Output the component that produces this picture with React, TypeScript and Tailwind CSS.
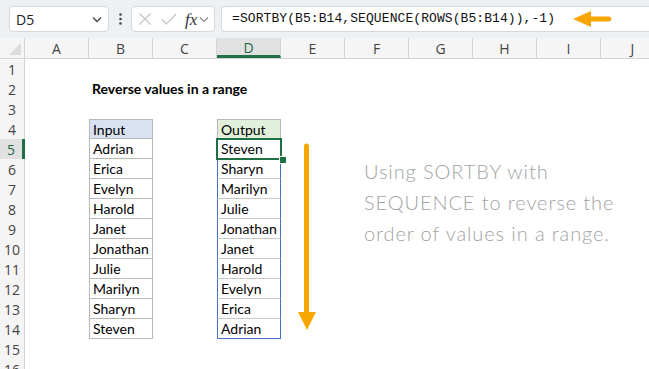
import React from "react";

const COLS = ["A", "B", "C", "D", "E", "F", "G", "H", "I", "J"];
const INPUT = ["Adrian", "Erica", "Evelyn", "Harold", "Janet", "Jonathan", "Julie", "Marilyn", "Sharyn", "Steven"];
const OUTPUT = [...INPUT].reverse();

const cellFont = { fontFamily: "Lato, 'Liberation Sans', sans-serif" };

function Cell({ r, c }: { r: number; c: string }) {
  let cls = "w-[64px] h-[20px] shrink-0 box-border px-[3px] text-[14px] leading-[19px] text-black whitespace-nowrap overflow-visible";
  let content: React.ReactNode = null;
  if (c === "B" && r === 2) {
    content = <span className="font-bold">Reverse values in a range</span>;
  }
  if (c === "B" && r >= 4 && r <= 14) {
    cls += " border-l border-r border-b border-[#b8b8b8]";
    if (r === 4) {
      cls += " border-t bg-[#d9e1f2]";
      content = "Input";
    } else content = INPUT[r - 5];
  }
  if (c === "D" && r === 4) {
    cls += " border border-[#b8b8b8] bg-[#e2efda]";
    content = "Output";
  }
  if (c === "D" && r >= 5 && r <= 14) {
    cls += " border-l border-r border-l-[#4472c4] border-r-[#4472c4] border-b";
    cls += r === 14 ? " border-b-[#4472c4]" : " border-b-[#c8c8c8]";
    content = OUTPUT[r - 5];
  }
  return (
    <div className={cls} style={cellFont}>
      {content}
    </div>
  );
}

export default function App() {
  const rows = Array.from({ length: 16 }, (_, i) => i + 1);
  return (
    <div className="w-[649px] h-[369px] overflow-hidden bg-white relative">
      {/* Toolbar */}
      <div className="h-[38px] bg-[#eef1f4] flex items-start pt-[6px] pl-[9px] gap-0">
        <div className="w-[100px] h-[26px] bg-white border border-[#d5d9dd] rounded-[4px] flex items-center justify-between pl-[6px] pr-[6px] shrink-0">
          <span className="text-[14px] text-[#222]" style={{ fontFamily: "'Open Sans', 'Noto Sans', sans-serif" }}>D5</span>
          <svg width="10" height="7" viewBox="0 0 10 7"><path d="M1 1.5 L5 5.5 L9 1.5" stroke="#444" strokeWidth="1.3" fill="none" /></svg>
        </div>
        <div className="w-[22px] h-[26px] flex items-center justify-center shrink-0">
          <svg width="3" height="12" viewBox="0 0 3 12">
            <circle cx="1.5" cy="1.5" r="1.3" fill="#444" />
            <circle cx="1.5" cy="6" r="1.3" fill="#444" />
            <circle cx="1.5" cy="10.5" r="1.3" fill="#444" />
          </svg>
        </div>
        <div className="w-[84px] h-[26px] bg-white border border-[#d5d9dd] rounded-[4px] flex items-center pl-[6px] shrink-0">
          <svg width="14" height="14" viewBox="0 0 14 14" className="mr-[9px]"><path d="M1.5 1.5 L12.5 12.5 M12.5 1.5 L1.5 12.5" stroke="#c4c4c4" strokeWidth="1.2" fill="none" /></svg>
          <svg width="16" height="14" viewBox="0 0 16 14" className="mr-[8px]"><path d="M1 7.5 L5.5 12 L15 2" stroke="#c4c4c4" strokeWidth="1.2" fill="none" /></svg>
          <span className="italic text-[17px] text-[#333] leading-none mr-[2px]" style={{ fontFamily: "'Liberation Serif', serif" }}>fx</span>
          <svg width="10" height="7" viewBox="0 0 10 7"><path d="M1 1.5 L5 5.5 L9 1.5" stroke="#888" strokeWidth="1.1" fill="none" /></svg>
        </div>
        <div className="ml-[6px] flex-1 h-[26px] bg-white border border-[#d5d9dd] rounded-l-[4px] border-r-0 flex items-center pl-[10px] relative">
          <span className="text-[13px] text-[#111] whitespace-nowrap tracking-[0.08px]" style={{ fontFamily: "'Liberation Mono', monospace" }}>
            =SORTBY(B5:B14,SEQUENCE(ROWS(B5:B14)),-1)
          </span>
          <svg width="40" height="18" viewBox="0 0 40 18" className="ml-[17px]">
            <path d="M18 6.5 L37 6.5 A2.5 2.5 0 0 1 37 11.5 L18 11.5 Z" fill="#f7a600" />
            <path d="M1 9 L19 1 L19 17 Z" fill="#f7a600" />
          </svg>
        </div>
      </div>

      {/* Column header */}
      <div className="h-[20px] flex bg-[#f5f5f5] border-b border-[#d4d4d4] box-content">
        <div className="w-[25px] h-[20px] shrink-0 border-r border-[#d4d4d4] box-border relative">
          <svg width="12" height="12" viewBox="0 0 12 12" className="absolute right-[3px] bottom-[3px]"><path d="M12 0 L12 12 L0 12 Z" fill="#dcdcdc" /></svg>
        </div>
        {COLS.map((c) => (
          <div
            key={c}
            className={
              "w-[64px] h-[20px] shrink-0 box-border border-r border-[#d4d4d4] flex items-center justify-center text-[14px] " +
              (c === "D" ? "bg-[#e1e1e1] border-b-[3px] border-b-[#1e7145] text-[#1e6b3c] pt-[2px]" : "text-[#444]")
            }
            style={{ fontFamily: "'Open Sans', 'Noto Sans', sans-serif" }}
          >
            {c}
          </div>
        ))}
      </div>

      {/* Grid */}
      <div className="relative">
        {rows.map((r) => (
          <div key={r} className="h-[20px] flex">
            <div
              className={
                "w-[25px] h-[20px] shrink-0 box-border border-r flex items-center justify-center text-[14px] " +
                (r === 5 ? "bg-[#e1e1e1] border-r-[3px] border-r-[#1e7145] text-[#1e6b3c]" : "bg-[#f5f5f5] border-[#d4d4d4] text-[#444]")
              }
              style={{ fontFamily: "'Open Sans', 'Noto Sans', sans-serif" }}
            >
              {r}
            </div>
            {COLS.map((c) => (
              <Cell key={c} r={r} c={c} />
            ))}
          </div>
        ))}

        {/* Selection on D5 */}
        <div className="absolute left-[216px] top-[79px] w-[66px] h-[22px] border-2 border-[#1e7145] pointer-events-none" />
        <div className="absolute left-[279px] top-[97px] w-[6px] h-[6px] bg-[#1e7145] border border-white box-content" />

        {/* Vertical arrow */}
        <svg className="absolute left-[297px] top-[84px]" width="20" height="190" viewBox="0 0 20 190">
          <path d="M7 3 A2.5 2.5 0 0 1 12 3 L12 170 L7 170 Z" fill="#f7a600" />
          <path d="M1 169 L19 169 L10 187 Z" fill="#f7a600" />
        </svg>

        {/* Annotation */}
        <div
          className="absolute left-[364px] top-[97px] text-[20px] leading-[31px] text-[#a3a3a3] whitespace-nowrap tracking-[0.9px] font-light"
          style={{ fontFamily: "Lato, 'Noto Sans', sans-serif" }}
        >
          <div>Using SORTBY with</div>
          <div>SEQUENCE to reverse the</div>
          <div>order of values in a range.</div>
        </div>
      </div>
    </div>
  );
}
